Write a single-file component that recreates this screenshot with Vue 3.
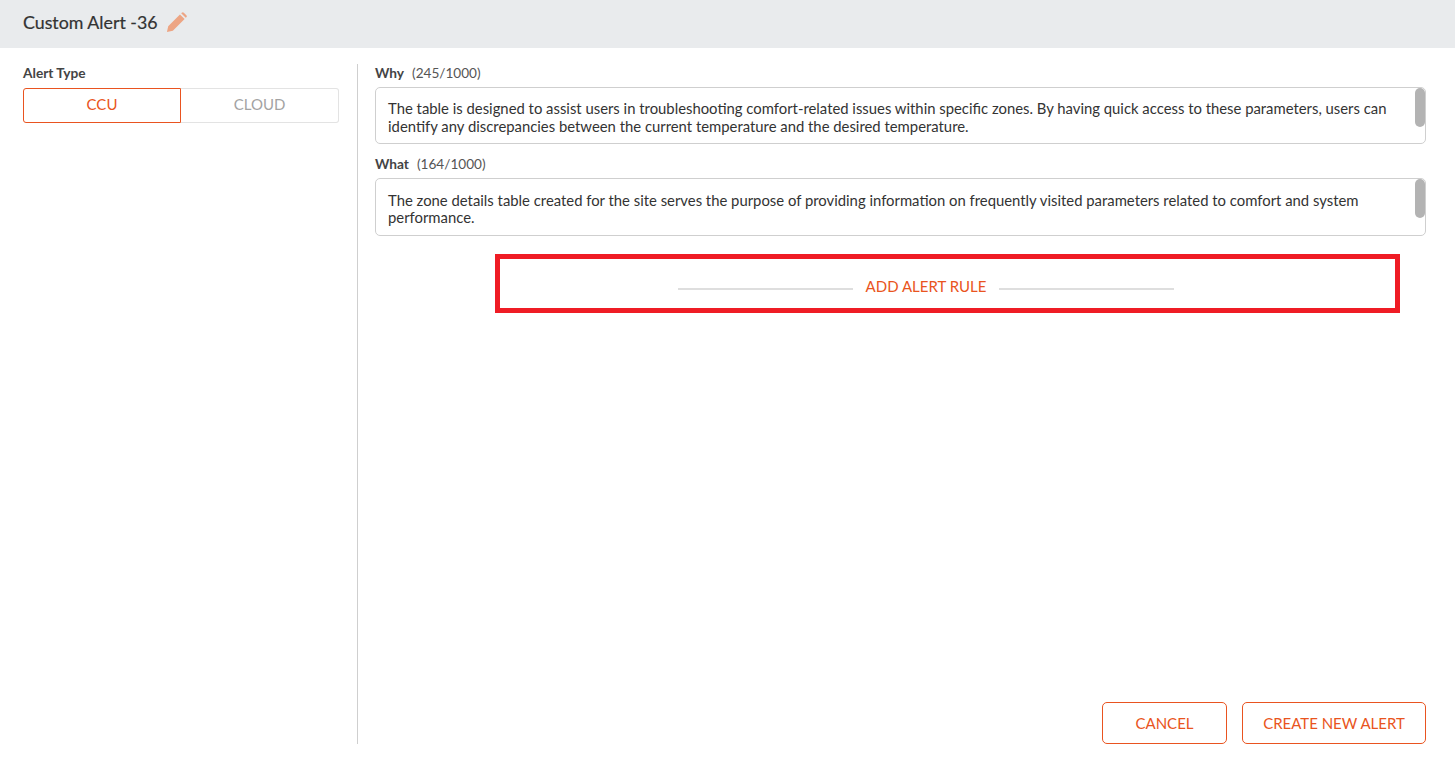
<script setup>
const fields = [
  { label: 'Why', count: '(245/1000)', text: 'The table is designed to assist users in troubleshooting comfort-related issues within specific zones. By having quick access to these parameters, users can identify any discrepancies between the current temperature and the desired temperature.' },
  { label: 'What', count: '(164/1000)', text: 'The zone details table created for the site serves the purpose of providing information on frequently visited parameters related to comfort and system performance.' }
]
</script>

<template>
  <div class="page">
    <header class="head">
      <h1 class="title">Custom Alert -36</h1>
      <svg class="pencil" width="21" height="21" viewBox="0 0 22 22" aria-hidden="true">
        <path fill="#eda584" d="M1 21l1.3-6.2L14.6 2.5l4.9 4.9L7.2 19.7zM15.9 1.3l.6-.6a1.6 1.6 0 0 1 2.2 0l2.6 2.6a1.6 1.6 0 0 1 0 2.2l-.6.6z"/>
      </svg>
    </header>
    <main class="body">
      <aside class="side">
        <div class="label">Alert Type</div>
        <div class="toggle">
          <button class="seg on">CCU</button>
          <button class="seg off">CLOUD</button>
        </div>
      </aside>
      <section class="content">
        <div v-for="f in fields" :key="f.label" class="field">
          <div class="label"><b>{{ f.label }}</b><span class="count">{{ f.count }}</span></div>
          <div class="box">
            <p class="text">{{ f.text }}</p>
            <span class="thumb"></span>
          </div>
        </div>
        <div class="rule-frame">
          <div class="rule">
            <span class="line"></span>
            <span class="rule-text">ADD ALERT RULE</span>
            <span class="line"></span>
          </div>
        </div>
        <div class="actions">
          <button class="btn cancel">CANCEL</button>
          <button class="btn create">CREATE NEW ALERT</button>
        </div>
      </section>
    </main>
  </div>
</template>

<style>
html, body { margin: 0; background: #fff; }
</style>

<style scoped>
.page {
  width: 1455px;
  height: 771px;
  overflow: hidden;
  font-family: Lato, "Open Sans", sans-serif;
  color: #333;
  background: #fff;
}
.head {
  height: 48px;
  display: flex;
  align-items: center;
  gap: 9px;
  padding-left: 23px;
  background: #e9ebed;
}
.title {
  margin: 0 0 4px;
  font-size: 17.8px;
  font-weight: 400;
  color: #333;
  -webkit-text-stroke: 0.2px #333;
}
.pencil { margin: -4px 0 0 -1px; }
.body {
  display: flex;
  padding-top: 16px;
}
.side {
  width: 334px;
  height: 680px;
  padding-left: 23px;
  border-right: 1px solid #cfcfcf;
}
.label {
  height: 18px;
  font-size: 13.7px;
  line-height: 18px;
  font-weight: 700;
  color: #444;
}
.toggle {
  display: flex;
  width: 316px;
  height: 35px;
  margin-top: 6px;
}
.seg {
  box-sizing: border-box;
  width: 158px;
  padding: 0 0 3px;
  background: #fff;
  font: 400 15px Lato, sans-serif;
}
.on {
  border: 1px solid #e95420;
  border-radius: 3px 0 0 3px;
  color: #e95420;
}
.off {
  border: 1px solid #e3e3e3;
  border-left: 0;
  border-radius: 0 3px 3px 0;
  color: #a3a3a3;
}
.content {
  position: relative;
  width: 1051px;
  margin-left: 17px;
}
.field + .field { margin-top: 11px; }
.field .label b { font-weight: 700; }
.count {
  margin-left: 8px;
  font-size: 13.6px;
  font-weight: 400;
  color: #555;
}
.box {
  position: relative;
  height: 57px;
  box-sizing: border-box;
  margin-top: 5px;
  padding: 11px 30px 0 12px;
  border: 1px solid #cfcfcf;
  border-radius: 5px;
}
.field + .field .box {
  height: 58px;
  padding-top: 13px;
}
.text {
  margin: 0;
  font-size: 14.85px;
  line-height: 18px;
  color: #333;
}
.field + .field .text { line-height: 17px; }
.thumb {
  position: absolute;
  top: 0;
  right: 0;
  width: 10px;
  height: 39px;
  border-radius: 5px;
  background: #b3b3b3;
}
.rule-frame {
  width: 905px;
  height: 59px;
  box-sizing: border-box;
  margin: 18px 0 0 120px;
  border: 5px solid #ef1c25;
}
.rule {
  display: flex;
  align-items: center;
  justify-content: center;
  gap: 13px;
  width: 496px;
  height: 49px;
  margin-left: 178px;
}
.line {
  flex: 1;
  height: 2px;
  margin-top: 10px;
  background: #dedede;
}
.rule-text {
  margin-top: 5px;
  font-size: 15px;
  color: #e95420;
}
.actions {
  position: absolute;
  right: 0;
  top: 638px;
  display: flex;
  gap: 15px;
}
.btn {
  height: 42px;
  padding: 0;
  background: #fff;
  border: 1px solid #e95420;
  border-radius: 5px;
  color: #e95420;
  font: 400 15px Lato, sans-serif;
}
.cancel { width: 125px; }
.create { width: 184px; }
</style>
